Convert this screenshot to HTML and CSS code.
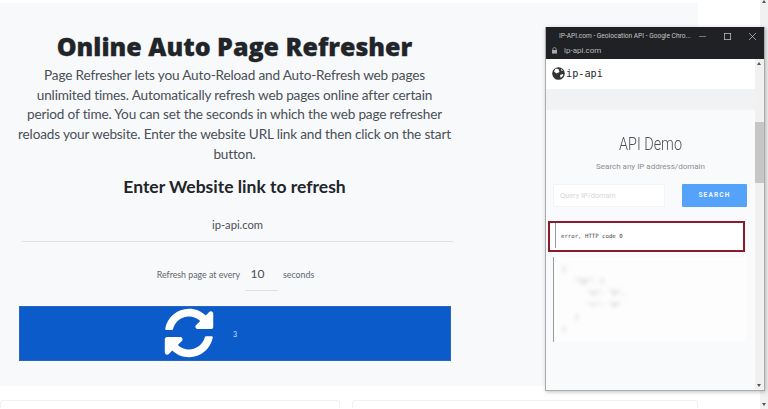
FILE: index.html
```html
<!DOCTYPE html>
<html>
<head>
  <meta charset="UTF-8">
  <title>Online Auto Page Refresher</title>
  <link rel="stylesheet" href="styles.css">
</head>
<body>
  <div class="page">
    <div class="main-col">
      <div class="hero">
        <h1>Online Auto Page Refresher</h1>
        <p class="lead">Page Refresher lets you Auto-Reload and Auto-Refresh web pages unlimited times. Automatically refresh web pages online after certain period of time. You can set the seconds in which the web page refresher reloads your website. Enter the website URL link and then click on the start button.</p>
        <h2>Enter Website link to refresh</h2>
        <div class="url-input">ip-api.com</div>
        <div class="timer-row">
          <span>Refresh page at every</span>
          <span class="seconds-input">10</span>
          <span>seconds</span>
        </div>
        <div class="start-button">
          <svg class="refresh-icon" viewBox="0 0 512 512" width="50" height="50">
            <path fill="#fff" d="M370.72 133.28C339.458 104.008 298.888 87.962 255.848 88c-77.458.068-144.328 53.178-162.791 126.85-1.344 5.363-6.122 9.15-11.651 9.15H24.103c-7.498 0-13.194-6.807-11.807-14.176C33.933 94.924 134.813 8 256 8c66.448 0 126.791 26.136 171.315 68.685L463.03 40.97C478.149 25.851 504 36.559 504 57.941V192c0 13.255-10.745 24-24 24H345.941c-21.382 0-32.09-25.851-16.971-40.971l41.75-41.749zM32 296h134.059c21.382 0 32.09 25.851 16.971 40.971l-41.75 41.75c31.262 29.273 71.835 45.319 114.876 45.28 77.418-.07 144.315-53.144 162.787-126.849 1.344-5.363 6.122-9.15 11.651-9.15h57.304c7.498 0 13.194 6.807 11.807 14.176C478.067 417.076 377.187 504 256 504c-66.448 0-126.791-26.136-171.315-68.685L48.97 471.03C33.851 486.149 8 475.441 8 454.059V320c0-13.255 10.745-24 24-24z"/>
          </svg>
          <span class="count">3</span>
        </div>
      </div>
      <div class="cards">
        <div class="card card-left"></div>
        <div class="card card-right"></div>
      </div>
    </div>
    <div class="page-scroll">
      <span class="arrow-up"></span>
      <span class="arrow-down"></span>
    </div>
  </div>

  <div class="popup">
    <div class="popup-title">
      <span class="popup-name">IP-API.com - Geolocation API - Google Chro...</span>
      <span class="win-btns">
        <svg viewBox="0 0 10 10"><path d="M0 5h10" stroke="#999"/></svg>
        <svg viewBox="0 0 10 10"><rect x=".5" y=".5" width="9" height="9" fill="none" stroke="#ccc"/></svg>
        <svg viewBox="0 0 10 10"><path d="M0 0l10 10M10 0L0 10" stroke="#ccc"/></svg>
      </span>
    </div>
    <div class="popup-url">
      <svg width="5" height="7" viewBox="0 0 7 9"><path d="M1.2 4V2.6a2.3 2.3 0 0 1 4.6 0V4" fill="none" stroke="#aaa"/><rect y="3.8" width="7" height="5" fill="#aaa"/></svg>
      <span>ip-api.com</span>
    </div>
    <div class="popup-body">
      <div class="popup-content">
        <div class="site-nav">
          <svg width="13" height="13" viewBox="0 0 13 13"><circle cx="6.5" cy="6.5" r="6.3" fill="#333"/><path d="M3.5 1.5l3 .5 1 3-3 1.5-2.5-2zM8 8l3-1 .2 1.5-2.5 2.5zM9 1.5l2 2-1.5.5z" fill="#fff"/></svg>
          <span>ip-api</span>
        </div>
        <div class="nav-gap"></div>
        <div class="demo">
          <div class="demo-title">API Demo</div>
          <div class="demo-sub">Search any IP address/domain</div>
          <div class="search-row">
            <div class="query">Query IP/domain</div>
            <div class="search-btn">SEARCH</div>
          </div>
          <div class="error-box">
            <div class="code-line">error, HTTP code 0</div>
          </div>
          <div class="code-block">
            <pre>{
   "ip": {
      "a": "b",
      "c": "d"
   }
}</pre>
          </div>
        </div>
      </div>
      <div class="popup-scroll">
        <span class="arrow-up"></span>
        <span class="thumb"></span>
        <span class="arrow-down"></span>
      </div>
    </div>
  </div>
</body>
</html>
```

FILE: styles.css
```css
* {
  box-sizing: border-box;
}

html, body {
  height: 100%;
  margin: 0;
  overflow: hidden;
}

body {
  font-family: Lato, "Open Sans", sans-serif;
  background: #fff;
  color: #212529;
}

.page {
  display: flex;
  height: 409px;
}

.main-col {
  width: 698px;
  padding-top: 3px;
}

.hero {
  height: 383px;
  background: #f8f9fa;
  padding: 27px 247px 0 18px;
  text-align: center;
}

h1 {
  margin: 0;
  font-family: "Open Sans", sans-serif;
  font-size: 25px;
  line-height: 33px;
  font-weight: 800;
  -webkit-text-stroke: 0.3px #212529;
}

.lead {
  margin: 3px 0 0;
  font-size: 13.6px;
  letter-spacing: -0.17px;
  line-height: 19.7px;
  color: #495057;
}

h2 {
  margin: 10px 0 0;
  font-size: 17.5px;
  line-height: 24px;
  font-weight: 700;
}

.url-input {
  margin: 14px 0 0 4px;
  width: 431px;
  height: 29px;
  line-height: 24px;
  font-size: 11.2px;
  border-bottom: 1px solid #dee2e6;
  color: #495057;
}

.timer-row {
  display: flex;
  justify-content: center;
  align-items: flex-start;
  gap: 5px;
  margin-top: 21px;
  padding-left: 2px;
  font-size: 8.8px;
  line-height: 24px;
  color: #5f666d;
}

.seconds-input {
  width: 33px;
  height: 28px;
  border-bottom: 1px solid #dee2e6;
  font-size: 12px;
  line-height: 22px;
  color: #495057;
  padding-right: 8px;
}

.start-button {
  display: flex;
  align-items: center;
  gap: 19px;
  margin: 15px 0 0 1px;
  width: 432px;
  height: 55px;
  padding-left: 144px;
  background: #0b5bcb;
  border: 1px solid #2a66bd;
  color: #cfe0ff;
  font-size: 7px;
}

.count {
  margin-top: 1px;
}

.cards {
  display: flex;
  justify-content: space-between;
  margin-top: 14px;
}

.card {
  height: 8px;
  background: #fff;
  border: 1px solid #f1f2f4;
  border-bottom: 0;
  border-radius: 3px 3px 0 0;
}

.card-left {
  width: 340px;
}

.card-right {
  width: 346px;
}

.page-scroll {
  flex: 1;
  position: relative;
}

.page-scroll::after {
  content: "";
  position: absolute;
  top: 0;
  bottom: 0;
  right: 0;
  width: 8px;
  background: #f1f1f1;
}

.page-scroll > .arrow-up {
  position: absolute;
  right: 2px;
  top: 0;
  z-index: 1;
}

.page-scroll > .arrow-down {
  position: absolute;
  right: 2px;
  bottom: 3px;
  z-index: 1;
}

.arrow-down, .arrow-up {
  display: block;
  width: 0;
  height: 0;
  border-left: 2.5px solid transparent;
  border-right: 2.5px solid transparent;
}

.arrow-down {
  border-top: 3px solid #555;
}

.arrow-up {
  border-bottom: 3px solid #555;
}

.popup {
  position: absolute;
  left: 545px;
  top: 27px;
  width: 220px;
  height: 364px;
  display: flex;
  flex-direction: column;
  background: #fff;
  border: 1px solid #a9abad;
  border-top: 0;
  box-shadow: 1px 1px 4px rgba(0, 0, 0, 0.25);
  overflow: hidden;
}

.popup-title {
  display: flex;
  justify-content: space-between;
  align-items: center;
  height: 17px;
  padding: 1px 8px 0 13px;
  background: #202124;
  color: #c4c6c9;
  font-family: Roboto, sans-serif;
  font-size: 6.6px;
  white-space: nowrap;
}

.win-btns {
  display: flex;
  gap: 18px;
}

.win-btns svg {
  width: 7px;
  height: 7px;
}

.popup-url {
  display: flex;
  align-items: center;
  gap: 7px;
  height: 15px;
  padding: 0 0 2px 6px;
  background: #202124;
  color: #b7b9bc;
  font-family: Roboto, sans-serif;
  font-size: 8px;
}

.popup-body {
  flex: 1;
  display: flex;
  min-height: 0;
  background: #f9fafc;
  font-family: Roboto, sans-serif;
}

.popup-content {
  flex: 1;
  min-width: 0;
}

.site-nav {
  display: flex;
  align-items: center;
  gap: 1px;
  height: 30px;
  padding: 0 6px 1px;
  background: #fff;
  color: #2a2a2a;
  font-family: "DejaVu Sans Mono", monospace;
  font-size: 10.2px;
}

.nav-gap {
  height: 21px;
  background: #f1f2f3;
}

.demo {
  padding-top: 22px;
  text-align: center;
}

.demo-title {
  font-weight: 300;
  font-size: 18px;
  line-height: 24px;
  color: #4d5156;
  transform: scaleX(0.8);
}

.demo-sub {
  margin-top: 5px;
  font-size: 8px;
  line-height: 12px;
  color: #8a8f94;
}

.search-row {
  display: flex;
  justify-content: space-between;
  margin: 11px 8px 0 7px;
}

.query {
  width: 112px;
  height: 23px;
  padding-left: 6px;
  background: #fff;
  border: 1px solid #f3f4f6;
  text-align: left;
  font-size: 7.4px;
  line-height: 21px;
  color: #d5d7da;
}

.search-btn {
  width: 65px;
  height: 23px;
  background: #55a2fa;
  border-radius: 1px;
  color: #f2f7ff;
  font-size: 6.5px;
  font-weight: 700;
  letter-spacing: 1.2px;
  line-height: 23px;
}

.error-box {
  margin: 14px 10px 0 2px;
  height: 31px;
  padding: 0 0 0 5px;
  border: 2px solid #8b1a2f;
  background: #fff;
}

.code-line {
  height: 25px;
  border-left: 1px solid #999;
  padding-left: 5px;
  text-align: left;
  font-family: "DejaVu Sans Mono", monospace;
  font-size: 5.7px;
  line-height: 27px;
  color: #444;
}

.code-block {
  margin: 5px 9px 0 7px;
  height: 85px;
  background: #fdfdfe;
  border-left: 1px solid #999;
  text-align: left;
}

.code-block pre {
  margin: 0;
  padding: 6px 0 0 8px;
  font-family: "DejaVu Sans Mono", monospace;
  font-size: 7px;
  line-height: 12px;
  color: #aaa;
  filter: blur(2px);
}

.popup-scroll {
  position: relative;
  width: 9px;
  background: #f1f1f1;
}

.popup-scroll .arrow-up {
  position: absolute;
  top: 3px;
  left: 2px;
}

.popup-scroll .arrow-down {
  position: absolute;
  bottom: 3px;
  left: 2px;
}

.thumb {
  position: absolute;
  top: 63px;
  left: 0;
  width: 9px;
  height: 61px;
  background: #c6c6c6;
}
```
